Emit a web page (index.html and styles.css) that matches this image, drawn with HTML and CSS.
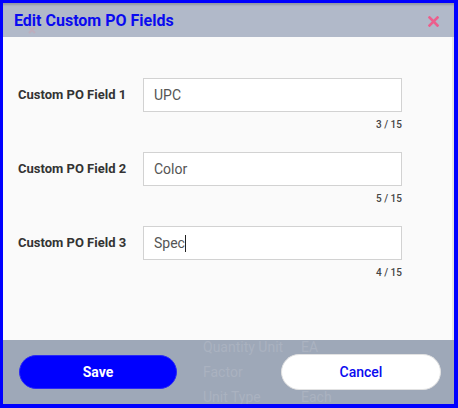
FILE: index.html
```html
<!DOCTYPE html>
<html lang="en">
<head>
    <meta charset="UTF-8">
    <title>Edit Custom PO Fields</title>
    <link rel="stylesheet" href="styles.css">
</head>
<body>
    <div class="frame">
        <div class="modal-head">
            <svg class="ghost-x" width="8" height="8" viewBox="0 0 8 8">
                <path d="M1 1 L7 7 M7 1 L1 7" stroke="#c4a9b8" stroke-width="2"/>
            </svg>
            <h1>Edit Custom PO Fields</h1>
            <button class="close" aria-label="Close">
                <svg width="11" height="11" viewBox="0 0 11 11">
                    <path d="M1.5 1.5 L9.5 9.5 M9.5 1.5 L1.5 9.5" stroke="#ec5f8d" stroke-width="2.6" stroke-linecap="square"/>
                </svg>
            </button>
        </div>

        <div class="modal-body">
            <div class="field-row">
                <label for="f1">Custom PO Field 1</label>
                <div class="field">
                    <input type="text" id="f1" value="UPC" maxlength="15">
                    <span class="count">3 / 15</span>
                </div>
            </div>
            <div class="field-row">
                <label for="f2">Custom PO Field 2</label>
                <div class="field">
                    <input type="text" id="f2" value="Color" maxlength="15">
                    <span class="count">5 / 15</span>
                </div>
            </div>
            <div class="field-row">
                <label for="f3">Custom PO Field 3</label>
                <div class="field">
                    <div class="fake-input">Spec<span class="caret"></span></div>
                    <span class="count">4 / 15</span>
                </div>
            </div>
        </div>

        <div class="modal-foot">
            <!-- page content showing through the overlay -->
            <div class="backdrop">
                <span>Quantity Unit</span><span>EA</span>
                <span>Factor</span><span></span>
                <span>Unit Type</span><span>Each</span>
            </div>
            <button class="btn btn-save">Save</button>
            <button class="btn btn-cancel">Cancel</button>
        </div>
    </div>
</body>
</html>
```

FILE: styles.css
```css
html, body {
    margin: 0;
    height: 100%;
}
body {
    font-family: Roboto, 'Liberation Sans', sans-serif;
    background-color: #9ea8b8;
}
.frame {
    box-sizing: border-box;
    width: 458px;
    height: 408px;
    border: solid #0000ff;
    border-width: 3px 4px 4px 3px;
    display: flex;
    flex-direction: column;
    overflow: hidden;
}
.modal-head {
    position: relative;
    height: 34px;
    background-color: #b1b9c9;
    box-shadow: inset 0 3px 2px -1px rgba(0, 0, 0, 0.18);
    display: flex;
    align-items: center;
    padding: 0 11px 0 11px;
}
.modal-head h1 {
    position: relative;
    margin: 0;
    flex: 1;
    font-size: 16px;
    font-weight: 700;
    color: #0a0af0;
}
.ghost-x {
    position: absolute;
    left: 25px;
    top: 23px;
    opacity: 0.7;
}
.close {
    background: none;
    border: none;
    padding: 0;
    width: 11px;
    height: 11px;
    margin-top: 3px;
    margin-right: 4px;
    cursor: pointer;
}
.close svg {
    display: block;
}
.modal-body {
    position: relative;
    z-index: 1;
    height: 303px;
    box-sizing: border-box;
    background-color: #fafafa;
    padding: 41px 0 0 15px;
    border-right: 2px solid #e6e6e6;
}
.field-row {
    display: flex;
    align-items: flex-start;
    height: 74px;
}
.field-row label {
    width: 125px;
    padding-top: 9px;
    font-size: 13px;
    font-weight: 700;
    color: #333;
}
.field {
    width: 259px;
    display: flex;
    flex-direction: column;
    align-items: flex-end;
}
.field input,
.fake-input {
    box-sizing: border-box;
    width: 100%;
    height: 34px;
    border: 1px solid #d2d2d2;
    background-color: #fff;
    padding: 0 10px;
    font-family: Roboto, 'Liberation Sans', sans-serif;
    font-size: 14px;
    color: #555;
    outline: none;
}
.fake-input {
    display: flex;
    align-items: center;
}
.caret {
    display: inline-block;
    width: 1px;
    height: 17px;
    background-color: #222;
}
.count {
    margin-top: 7px;
    font-size: 10px;
    font-weight: 500;
    color: #444;
}
.modal-foot {
    position: relative;
    flex: 1;
    background-color: #9ea8b8;
    display: flex;
    align-items: center;
    justify-content: space-between;
    padding: 0 13px 0 16px;
}
.backdrop {
    position: absolute;
    left: 200px;
    top: -2px;
    display: grid;
    grid-template-columns: 98px auto;
    row-gap: 7px;
    font-size: 14px;
    line-height: 18px;
    color: #aab2c0;
}
.btn {
    position: relative;
    width: 158px;
    height: 34px;
    border-radius: 17px;
    font-family: Roboto, 'Liberation Sans', sans-serif;
    font-size: 14px;
    font-weight: 700;
    cursor: pointer;
}
.btn-save {
    background-color: #0000ff;
    border: 1px solid #2a2af5;
    color: #fff;
}
.btn-cancel {
    width: 160px;
    height: 36px;
    border-radius: 18px;
    background-color: #fff;
    border: 1px solid #e2e2e2;
    color: #0a0af0;
    font-weight: 500;
}
```
